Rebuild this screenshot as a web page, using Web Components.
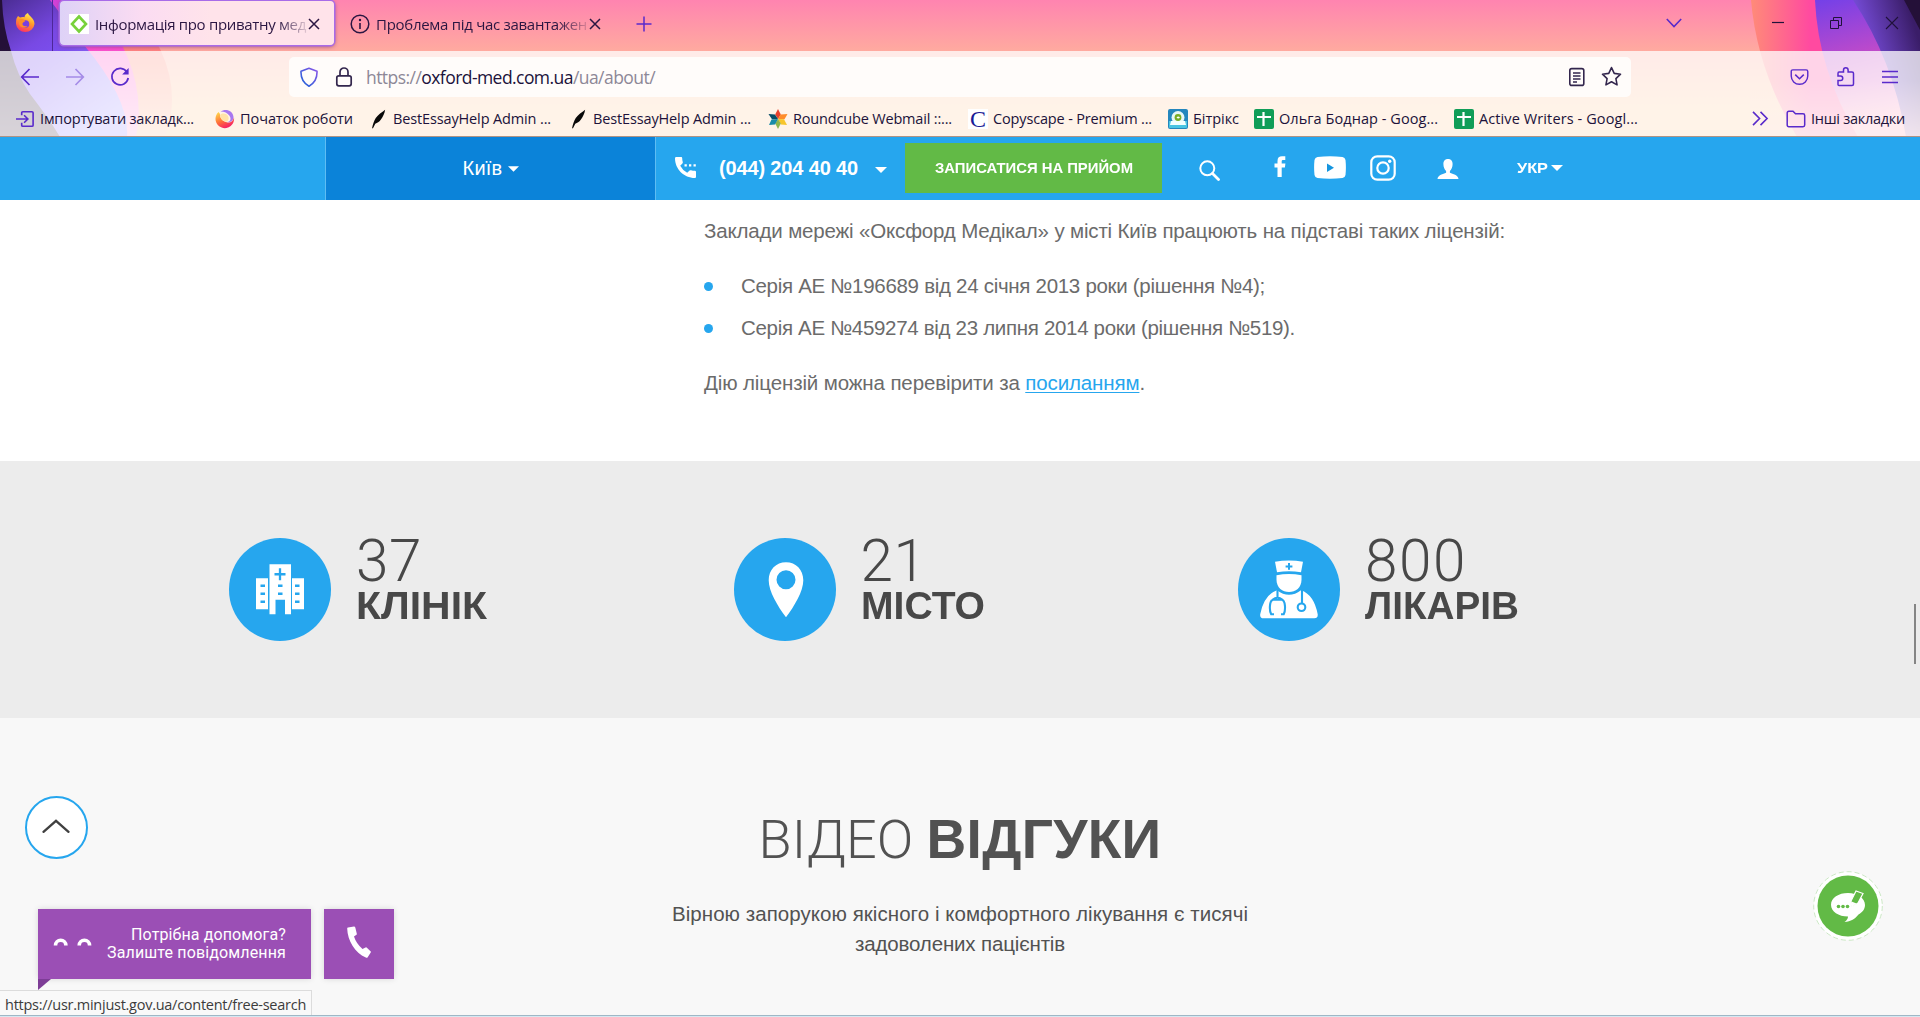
<!DOCTYPE html>
<html lang="uk">
<head>
<meta charset="utf-8">
<title>Оксфорд Медікал</title>
<style>
html,body{margin:0;padding:0;height:100%;overflow:hidden}
body{font-family:"Liberation Sans",Arial,sans-serif;background:#f8f8f8}
</style>
</head>
<body>
<app-window></app-window>
<script>
const ICONS = {
firefox:['0 0 20 20','<defs><linearGradient id="a" x1=".7" y1="0" x2=".3" y2="1"><stop offset="0" stop-color="#fff04f"/><stop offset=".45" stop-color="#ff9a2a"/><stop offset="1" stop-color="#ff2c68"/></linearGradient></defs><path d="M1.500 5.500 3 3l2 1.500c1-.5 3-.7 4.500-.3C9.500 2.500 11 .8 13 0c.2 3 6.500 4.500 6.500 11A9.300 9 0 0 1 1 11c0-2 .1-4 .5-5.500z" fill="url(#a)"/><circle cx="10.500" cy="11" r="3.800" fill="#7a3fe0"/><path d="M4 6.500c3-1 5.500 0 6 1.500.2 1-2 1-2.500 2.500-.5 2 2 3.500 5 2.500-2.500 3-8 1.500-8.500-2.500z" fill="#ff8c28"/>'],
oxford:['0 0 20 20','<path fill="#fff" d="M0 0h20v20H0z"/><path d="M10 2.500 17 10 10 17.500 3 10z" fill="none" stroke="#78d13b" stroke-width="2.600"/>'],
close:['0 0 12 12','<path d="M1 1l10 10M11 1 1 11" fill="none" stroke="#2b1642" stroke-width="1.500"/>'],
info:['0 0 20 20','<circle cx="10" cy="10" r="8.800" fill="none" stroke="#2b1642" stroke-width="1.500"/><path d="M10 9v6" stroke="#2b1642" stroke-width="1.600"/><circle cx="10" cy="6" r="1.200" fill="#2b1642"/>'],
plus:['0 0 16 16','<path d="M8 .5v15M.5 8h15" stroke="#592acb" stroke-width="1.500"/>'],
down:['0 0 16 10','<path d="M.8 1 8 8.500 15.200 1" fill="none" stroke="#592acb" stroke-width="1.600"/>'],
min:['0 0 12 12','<path d="M0 5.500h12" stroke="#20123a" stroke-width="1.200"/>'],
restore:['0 0 12 12','<path d="M.5 3.500h8v8h-8zM3.500 3.500v-3h8v8h-3" fill="none" stroke="#20123a"/>'],
winclose:['0 0 14 14','<path d="M1 1l12 12M13 1 1 13" stroke="#20123a" stroke-width="1.100"/>'],
back:['0 0 20 20','<path d="M19 10H2M9.500 2 1.700 10l7.800 8" fill="none" stroke="#592acb" stroke-width="1.700"/>'],
fwd:['0 0 20 20','<path d="M1 10h17M10.500 2l7.800 8-7.800 8" fill="none" stroke="#592acb" stroke-width="1.700" opacity=".45"/>'],
reload:['0 0 20 20','<path d="M17 5.200A8.200 8.200 0 1 0 18.200 11" fill="none" stroke="#592acb" stroke-width="1.700"/><path d="M18.600 1v6.500h-6.500z" fill="#592acb"/>'],
shield:['0 0 20 20','<defs><linearGradient id="b" x1="1" y1="0" x2="0" y2="1"><stop stop-color="#8b55e8"/><stop offset="1" stop-color="#1a62d6"/></linearGradient></defs><path d="M10 1.200 18 4.200c.3 6.500-1.500 11.500-8 15-6.500-3.500-8.300-8.500-8-15z" fill="none" stroke="url(#b)" stroke-width="1.600" stroke-linejoin="round"/>'],
lock:['0 0 18 20','<rect x="1.800" y="8.800" width="14.400" height="10" rx="2" fill="none" stroke="#33264d" stroke-width="1.700"/><path d="M5 8.500V5a4 4 0 0 1 8 0v3.500" fill="none" stroke="#33264d" stroke-width="1.700"/>'],
reader:['0 0 18 20','<rect x="1.800" y="1.600" width="14" height="16.800" rx="2" fill="none" stroke="#33264d" stroke-width="1.600"/><path d="M5 6h7.500M5 9h7.500M5 12h7.500M5 15h4" stroke="#33264d" stroke-width="1.300"/>'],
star:['0 0 20 20','<path d="m10 1.500 2.600 5.500 6 .8-4.400 4.200 1.100 6-5.300-3-5.300 3 1.100-6L1.400 7.800l6-.8z" fill="none" stroke="#33264d" stroke-width="1.500" stroke-linejoin="round"/>'],
pocket:['0 0 20 18','<path d="M3 1.500h14q1.700 0 1.700 1.700V8a8.700 8.700 0 0 1-17.400 0V3.200Q1.300 1.500 3 1.500z" fill="none" stroke="#592acb" stroke-width="1.500"/><path d="m5.500 6.500 4.500 4.300 4.500-4.300" fill="none" stroke="#592acb" stroke-width="1.600"/>'],
puzzle:['0 0 20 20','<path d="M3 5.500h4.500V3.500a2.300 2.300 0 0 1 4.600 0v2H16q1.500 0 1.500 1.500v10.500q0 1.500-1.500 1.500H3q-1 0-1-1v-4h2.500a2 2 0 0 0 0-4.500H2v-2.500q0-1.500 1-1.500z" fill="none" stroke="#592acb" stroke-width="1.500"/>'],
menu:['0 0 16 14','<path d="M0 1.500h16M0 7h16M0 12.500h16" stroke="#592acb" stroke-width="1.400"/>'],
import:['0 0 20 18','<path d="M6 5V2.500q0-1.200 1.200-1.200h9.600q1.200 0 1.200 1.200v13q0 1.200-1.200 1.200H7.200Q6 16.700 6 15.500V13M0 9h12M8.500 5l4 4-4 4" fill="none" stroke="#592acb" stroke-width="1.700"/>'],
fox2:['0 0 20 20','<defs><linearGradient id="c" x1=".2" y1="0" x2=".7" y2="1"><stop stop-color="#ffd54a"/><stop offset=".5" stop-color="#ff7139"/><stop offset="1" stop-color="#f5156c"/></linearGradient></defs><path d="M3.500 3A9.300 9.300 0 1 0 19 8.500c-1 4-3.500 5.500-6.500 5C8 13 4.500 9.500 5 5z" fill="url(#c)"/><path d="M5.500 2.500c5-3.500 12.500-1 13 5.500.2 3.500-3 6-6.500 5 3.500-.2 4.500-3.500 2.500-6.200C12.500 4 9.500 2.500 5.500 2.500z" fill="#a878f0"/><path d="M5 6c2-2 6-2 8 1 1 2 1 4-1 5.500C8.500 13 5.500 10 5 6z" fill="#ffe3a8"/>'],
feather:['0 0 16 20','<path d="M0 20c1-4 1.800-7.500 4-11C6.500 5 10.500 3 14 0c-.5 4-2.500 7.500-4.500 10.500-2 2.800-3.800 3.500-6 4.500L1.200 19.500z" fill="#090909"/>'],
round:['0 0 20 20','<path d="M10 0l2.800 5.500L10 10 7.200 5.500z" fill="#e8432e"/><path d="M19.500 5l-3 5.200L10 10l2.500-4.500z" fill="#ff8c2a"/><path d="M19 16l-6-.5L10 10l6 .3z" fill="#f7c52c"/><path d="M10 20l-2.800-5.500L10 10l2.800 4.500z" fill="#90b54b"/><path d="M1 16l2.500-5.500L10 10l-3 5.500z" fill="#198ba8"/><path d="M.5 5l6.500.5L10 10l-6 .3z" fill="#074e68"/>'],
bitrix:['0 0 20 20','<rect width="20" height="20" rx="2" fill="#2486bd"/><path d="M1 12h18v6q0 1-1 1H2q-1 0-1-1z" fill="#48c4e2"/><circle cx="10" cy="8.500" r="6.500" fill="#e8f7f5"/><path d="M3 12h14l1 4H2z" fill="#f2ffff"/><circle cx="10" cy="8.500" r="3.400" fill="#77ac24"/><path d="M8.500 8.500q1.700-2 3.500 0-1.800 2-3.500 0z" fill="#fff"/>'],
sheets:['0 0 20 20','<rect width="20" height="20" rx="2" fill="#109d58"/><path d="M9.500 3v14M3 8h14" stroke="#fff" stroke-width="2.200"/>'],
more:['0 0 18 16','<path d="m1 1 7 7-7 7M9 1l7 7-7 7" fill="none" stroke="#592acb" stroke-width="1.700"/>'],
folder:['0 0 20 18','<path d="M1.200 15V3q0-1.700 1.700-1.700H7l2.500 2.500h7.500q1.700 0 1.700 1.700V15q0 1.700-1.700 1.700H2.900Q1.200 16.700 1.200 15z" fill="none" stroke="#592acb" stroke-width="1.500"/>'],
caret:['0 0 12 6','<path d="M0 0h12L6 6z" fill="#fff"/>'],
callmenu:['0 0 21 21','<path d="M1.200 0h5q1 0 1 1.200 0 2 .6 3.800.2.800-.4 1.400L5.200 8.800a17 17 0 0 0 7 7l2.400-2.300q.6-.5 1.400-.3 1.900.6 3.900.6 1.100 0 1.100 1.100v5q0 1.100-1.100 1.100C8.900 20.900 0 12 0 1.200Q0 0 1.200 0z" fill="#fff"/><path d="M9.500 8.400h2.300M14 8.400h2.300M18.500 8.400h2.300" stroke="#fff" stroke-width="2.200"/>'],
search:['0 0 21 21','<circle cx="8.300" cy="8.300" r="7" fill="none" stroke="#fff" stroke-width="2"/><path d="m13.500 13.500 6 6" stroke="#fff" stroke-width="2.800" stroke-linecap="round"/>'],
fb:['0 0 12 21','<path d="M3.500 21V11.500H.5V7.500h3V5C3.500 1.700 5.200.3 8 .3h3.300v3.600H9.200C8 3.900 7.700 4.400 7.700 5.400v2.100h3.700l-.5 4H7.700V21z" fill="#fff"/>'],
yt:['0 0 32 23','<path d="M3.500 1Q16-.6 28.500 1 31 1.300 31.500 4q.8 7.500 0 15-.4 2.500-3 3-12.500 1.300-25 0-2.600-.5-3-3-.8-7.500 0-15Q1 1.300 3.500 1z" fill="#fff"/><path d="M13 7.500v8.500l7-4.300z" fill="#1595df"/>'],
insta:['0 0 26 26','<rect x="1.300" y="1.300" width="23.400" height="23.400" rx="6" fill="none" stroke="#fff" stroke-width="2.200"/><circle cx="13" cy="13" r="5.700" fill="none" stroke="#fff" stroke-width="2.200"/><circle cx="19.700" cy="6.200" r="1.700" fill="#fff"/>'],
user:['0 0 22 20','<path d="M11 0c3.300 0 4.600 2.200 4.600 5 0 3-1.100 5.500-2.700 7v1.800c3 1.200 8.100 2 8.600 6.200H.5c.5-4.200 5.600-5 8.600-6.200V12C7.500 10.500 6.400 8 6.400 5c0-2.800 1.300-5 4.600-5z" fill="#fff"/>'],
clinic:['0 0 102 102','<g fill="#fff"><path d="M27 40h12v31H27zM63 40h12v31H63zM40.500 26h21.500v50h-6V61.500h-9.500V76h-6z"/></g><path d="M51 30v12M45.500 36h11M49 47.500h4.500M49 55.500h4.500M31.500 47.500h4.500M31.500 55.500h4.500M31.500 63.500h4.500M66 47.500h4.500M66 55.500h4.500M66 63.500h4.500" stroke="#26a6ee" stroke-width="2.300"/>'],
pin:['0 0 102 102','<path fill="#fff" fill-rule="evenodd" d="M52 24c10 0 17.300 7.500 17.300 18 0 11-9 26-17.300 37C43.700 68 34.700 53 34.700 42 34.700 31.500 42 24 52 24zm0 8a9.500 9.500 0 1 0 0 19 9.500 9.500 0 0 0 0-19z"/>'],
doctor:['0 0 102 102','<g fill="#fff"><path d="M37 23.500q14-2.500 28 0L63 34q-12-1.800-24 0z"/><path d="M38.500 37q12.500-2.500 25 0v4.500c0 8-6 12.300-12.500 12.300S38.500 49.500 38.500 41.500z"/><path d="M39 52q12 9 24 0 13 4.500 16.700 24 .4 4-3.400 4H25.500q-3.800 0-3.300-4Q26 56.500 39 52z"/></g><path d="M51 24.800v6.800M47.600 28.200h6.800" stroke="#26a6ee" stroke-width="2"/><g fill="none" stroke="#26a6ee" stroke-width="2.100"><path d="M39.500 51v8.500M34.500 61.500q5-4.500 10 0M36 76h-2.800c-2-3.700-2-14 2-14.500h8.500c4 .5 4 10.800 2 14.500H43M64 51v14"/><circle cx="63.500" cy="69" r="3.800"/></g>'],
up:['0 0 28 14','<path d="m1.500 12.800 12.500-11 12.500 11" fill="none" stroke="#404040" stroke-width="2.300" stroke-linecap="round"/>'],
eyes:['0 0 40 8','<path d="M2.500 7.500a5.200 5.200 0 0 1 10.400 0M26.200 7.500a5.200 5.200 0 0 1 10.400 0" fill="none" stroke="#fff" stroke-width="3.600"/>'],
phone:['0 0 24 32','<path d="M1 1.500 7 .5q1 0 1.300 1l1.500 6.200q.1.800-.7 1.400L7 10.500q2.200 7 8.500 12.500l3-1.500q.8-.4 1.400.2l3.600 3.500q.7.600.2 1.400l-3 4.700q-.7.900-1.900.3C8 27 .5 14.500.2 2.500q0-.8.8-1z" fill="#fff"/>'],
chat:['0 0 70 70','<circle cx="35" cy="35" r="34.300" fill="#fff" stroke="#bfe3b6" stroke-width=".8" stroke-dasharray="5 3"/><circle cx="35" cy="35" r="30.500" fill="#62ba46"/><path d="M35 22c9.500 0 17 5.200 17 12 0 4.500-3 7.500-6.500 9.500-3.500 4.500-7.500 7-14 7.500 2.500-1.700 3.500-3.500 3.500-5.500-9.500 0-17-5-17-11.800S25.500 22 35 22z" fill="#fff"/><g fill="#62ba46"><circle cx="25.500" cy="35.500" r="1.800"/><circle cx="30" cy="35.500" r="1.800"/><circle cx="34.500" cy="35.500" r="1.800"/></g><path d="m38 30 5-10 7 2.500-5 9.500-6 4z" fill="#62ba46" stroke="#fff" stroke-width="1.200"/><path d="m38.500 30.500 5 2-4.500 3.500z" fill="#fff"/>']
};
const def=(n,html,init)=>customElements.define(n,class extends HTMLElement{
 connectedCallback(){
  if(this.shadowRoot)return;
  const r=this.attachShadow({mode:'open'});
  r.innerHTML=typeof html==='function'?html(this):html;
  if(init)init(this,r);
 }});
const A=(e,n,d='')=>e.getAttribute(n)??d;

def('ui-icon',e=>{
 const [vb,body]=ICONS[A(e,'name')];
 return `<style>:host{display:block;flex:none;width:${A(e,'w')}px;height:${A(e,'h')}px}svg{display:block;width:100%;height:100%}</style><svg viewBox="${vb}">${body}</svg>`;
});

/* Single text line tuned to a given measure: by tracking, or by glyph width when [stretch] is set */
def('fit-text',e=>`<style>:host{display:block;flex:none;white-space:nowrap;width:${A(e,'w')}px}span{display:inline-block;vertical-align:top;transform-origin:0 0}</style><span><slot></slot></span>`,(e,r)=>{
 const s=r.querySelector('span'),n=e.textContent.length;
 const w=s.getBoundingClientRect().width;
 if(!w)return;
 if(e.hasAttribute('stretch'))s.style.transform=`scaleX(${(+A(e,'w')/w).toFixed(4)})`;
 else s.style.letterSpacing=((+A(e,'w')-w)/n).toFixed(3)+'px';
});

def('browser-tab',e=>`<style>
:host{display:flex;align-items:center;box-sizing:border-box;width:274px;height:44px;padding:2px 0 0 9px;border-radius:4px;color:#2b1642;font:15px/24px "Open Sans","Noto Sans",sans-serif}
:host([active]){background:linear-gradient(90deg,#ded2f7,#fbdcf2 30%,#ffe3ea 55%);box-shadow:0 0 0 1.500px #a86be8,0 1px 5px #7d3b7a}
.t{margin-left:6px;width:212px;-webkit-mask:linear-gradient(90deg,#000 86%,#0002);mask:linear-gradient(90deg,#000 86%,#0002)}
.t+ui-icon{margin-left:1px}
</style><ui-icon name="${A(e,'icon')}" w="20" h="20"></ui-icon><div class="t"><fit-text w="${A(e,'w')}">${A(e,'label')}</fit-text></div><ui-icon name="close" w="12" h="12"></ui-icon>`);

def('bookmark-item',e=>`<style>
:host{display:flex;align-items:center;flex:none;margin-left:${A(e,'ml',0)}px;color:#20123a;font:14.500px/24px "Open Sans","Noto Sans",sans-serif}
fit-text{margin:1px 0 0 ${A(e,'gap',5)}px}
.c{width:20px;height:20px;background:#fff;color:#1c1c96;font:24px/20px "Liberation Serif",serif;text-align:center}
</style>${A(e,'icon')==='c'?'<div class="c">C</div>':`<ui-icon name="${A(e,'icon')}" w="${A(e,'iw',20)}" h="${A(e,'ih',20)}"></ui-icon>`}<fit-text w="${A(e,'w')}">${A(e,'label')}</fit-text>`);

def('browser-chrome',`<style>
:host{display:block;position:relative;height:137px;overflow:hidden;box-sizing:border-box;border-bottom:1px solid #b09384}
.art{position:absolute;left:0;top:0}
.tabs,.nav,.marks{position:relative;display:flex;align-items:center}
.tabs{height:51px;box-sizing:border-box;padding-bottom:5px}
.low{position:relative;height:85px;background:rgba(255,255,255,.76)}
.nav{height:50px;box-sizing:border-box;padding-top:1px}
.url{display:flex;align-items:center;width:1342px;height:40px;border-radius:5px;background:#fffcfa;margin-left:159px;box-sizing:border-box;padding-left:10px;color:#8d8897;font:17.500px/26px "Open Sans","Noto Sans",sans-serif}
.url fit-text{margin-top:1px}
b{font-weight:400;color:#20123a}
.marks{height:35px}
.sep{width:1px;height:51px;background:#4d2798;margin:5px 7px 0 17px}
</style>
<svg class="art" width="1920" height="137" viewBox="0 0 1920 137">
<defs>
<linearGradient id="bg" x2="0" y2="1"><stop stop-color="#ff84b0"/><stop offset=".38" stop-color="#ffab9f"/><stop offset=".8" stop-color="#ffce9e"/></linearGradient>
<linearGradient id="p" x2=".6" y2="1"><stop stop-color="#4a2c92"/><stop offset=".35" stop-color="#7849e4"/><stop offset=".5" stop-color="#7c50f0"/><stop offset="1" stop-color="#a89cff"/></linearGradient>
<linearGradient id="m" x2="0" y2="1"><stop stop-color="#d040d8"/><stop offset=".4" stop-color="#ff52cc"/><stop offset="1" stop-color="#ffb0d8"/></linearGradient>
<linearGradient id="o" x2="0" y2="1"><stop stop-color="#ff62a0"/><stop offset=".45" stop-color="#ff8a78"/><stop offset="1" stop-color="#ffc9a8"/></linearGradient>
<linearGradient id="m2"><stop stop-color="#ff8b78"/><stop offset=".35" stop-color="#ff4aa0"/><stop offset="1" stop-color="#ff4aa0"/></linearGradient>
<linearGradient id="p2" x2=".2" y2="1"><stop stop-color="#7340e8"/><stop offset=".5" stop-color="#c44bc8"/><stop offset="1" stop-color="#ff9cc8"/></linearGradient>
<linearGradient id="p3" x1="0" x2=".8" y1=".5" y2="0"><stop stop-color="#8b5cff"/><stop offset="1" stop-color="#3a1d68"/></linearGradient>
<linearGradient id="fade" x2="0" y2="1"><stop offset=".35" stop-color="#ffc0b0" stop-opacity="0"/><stop offset="1" stop-color="#ffc6b8" stop-opacity=".6"/></linearGradient>
<linearGradient id="dk" x2="0" y2="1"><stop offset=".35" stop-color="#241038"/><stop offset="1" stop-color="#5d4a60"/></linearGradient>
</defs>
<path fill="url(#bg)" d="M0 0h1920v137H0z"/>
<path fill="url(#o)" d="M0 0h126Q190 70 165 137H0z"/>
<path fill="url(#m)" d="M0 0h92Q150 70 136 137H0z"/>
<path fill="url(#p)" d="M0 0h50Q65 20 84 45 130 100 127 137H0z"/>
<path fill="url(#dk)" d="M0 0h2Q3 28 11 51 17 75 30 94 50 120 60 137H0z"/>
<path fill="url(#m2)" d="M1751 0Q1757 70 1797 137h123V0z"/>
<path fill="url(#p2)" d="M1815 0Q1818 70 1858 137h62V0z"/>
<path fill="url(#p3)" d="M1853 0Q1893 60 1906 137h14V0z"/>
<path fill="#241038" d="M1904 0h16v30z"/>
<path fill="url(#fade)" d="M1750 51h170v86h-170z"/>
</svg>
<div class="tabs">
<ui-icon name="firefox" w="20" h="20" style="margin-left:15px"></ui-icon><div class="sep"></div>
<browser-tab active icon="oxford" w="211" label="Інформація про приватну мед"></browser-tab>
<browser-tab icon="info" w="211" label="Проблема під час завантажен" style="margin-left:7px"></browser-tab>
<ui-icon name="plus" w="16" h="16" style="margin:2px 0 0 21px"></ui-icon>
<ui-icon name="down" w="16" h="10" style="margin-left:1014px"></ui-icon>
<ui-icon name="min" w="12" h="12" style="margin-left:90px"></ui-icon>
<ui-icon name="restore" w="12" h="12" style="margin:0 0 0 46px"></ui-icon>
<ui-icon name="winclose" w="14" h="14" style="margin:0 0 0 43px"></ui-icon>
</div>
<div class="low">
<div class="nav">
<ui-icon name="back" w="20" h="20" style="margin-left:20px"></ui-icon>
<ui-icon name="fwd" w="20" h="20" style="margin-left:25px"></ui-icon>
<ui-icon name="reload" w="20" h="20" style="margin-left:25px"></ui-icon>
<div class="url"><ui-icon name="shield" w="20" h="20"></ui-icon><ui-icon name="lock" w="18" h="20" style="margin:0 13px 0 16px"></ui-icon><fit-text w="289">https://<b>oxford-med.com.ua</b>/ua/about/</fit-text><ui-icon name="reader" w="18" h="20" style="margin-left:913px"></ui-icon><ui-icon name="star" w="21" h="21" style="margin-left:15px"></ui-icon></div>
<ui-icon name="pocket" w="19" h="18" style="margin-left:159px"></ui-icon>
<ui-icon name="puzzle" w="20" h="21" style="margin-left:27px"></ui-icon>
<ui-icon name="menu" w="16" h="14" style="margin-left:26px"></ui-icon>
</div>
<div class="marks">
<bookmark-item ml="16" icon="import" iw="19" ih="18" w="154" label="Імпортувати закладк..."></bookmark-item>
<bookmark-item ml="21" icon="fox2" w="113" label="Початок роботи"></bookmark-item>
<bookmark-item ml="19" icon="feather" iw="15" gap="6" w="158" label="BestEssayHelp Admin ..."></bookmark-item>
<bookmark-item ml="21" icon="feather" iw="15" gap="6" w="158" label="BestEssayHelp Admin ..."></bookmark-item>
<bookmark-item ml="17" icon="round" w="159" label="Roundcube Webmail ::..."></bookmark-item>
<bookmark-item ml="16" icon="c" w="159" label="Copyscape - Premium ..."></bookmark-item>
<bookmark-item ml="16" icon="bitrix" w="46" label="Бітрікс"></bookmark-item>
<bookmark-item ml="15" icon="sheets" w="159" label="Ольга Боднар - Goog..."></bookmark-item>
<bookmark-item ml="16" icon="sheets" w="159" label="Active Writers - Googl..."></bookmark-item>
<ui-icon name="more" w="17" h="15" style="margin-left:114px"></ui-icon>
<bookmark-item ml="17" icon="folder" ih="18" w="94" label="Інші закладки"></bookmark-item>
</div>
</div>`);

def('site-header',`<style>
:host{display:flex;align-items:center;box-sizing:border-box;height:63px;padding-bottom:2px;background:#26a6ee;color:#fff;font-size:20px;line-height:26px}
.city{display:flex;align-items:center;justify-content:center;gap:5px;box-sizing:border-box;width:331px;height:63px;margin:2px 0 0 325px;padding-bottom:1px;background:#0b83d9;border:solid #5ebdf3;border-width:0 1px}
.tel{font-weight:700;margin-left:23px}
.btn{display:flex;align-items:center;justify-content:center;width:257px;height:50px;background:#62ba46;font:700 15px/20px "Liberation Sans",sans-serif;margin-left:18px}
.lang{font:700 15px/20px "Liberation Sans",sans-serif;margin-left:58px}
</style>
<div class="city"><fit-text w="40">Київ</fit-text><ui-icon name="caret" w="11" h="6" style="margin-top:2px"></ui-icon></div>
<ui-icon name="callmenu" w="21" h="21" style="margin-left:19px"></ui-icon>
<fit-text class="tel" w="139">(044) 204 40 40</fit-text>
<ui-icon name="caret" w="12" h="6" style="margin:4px 0 0 17px"></ui-icon>
<div class="btn"><fit-text stretch w="198">ЗАПИСАТИСЯ НА ПРИЙОМ</fit-text></div>
<ui-icon name="search" w="21" h="21" style="margin:5px 0 0 37px"></ui-icon>
<ui-icon name="fb" w="12" h="21" style="margin:-3px 0 0 54px"></ui-icon>
<ui-icon name="yt" w="32" h="23" style="margin:-1px 0 0 28px"></ui-icon>
<ui-icon name="insta" w="26" h="26" style="margin:0 0 0 24px"></ui-icon>
<ui-icon name="user" w="22" h="20" style="margin:3px 0 0 41px"></ui-icon>
<fit-text class="lang" stretch w="31">УКР</fit-text>
<ui-icon name="caret" w="12" h="6" style="margin-left:3px"></ui-icon>`);

def('license-block',`<style>
:host{display:block;box-sizing:border-box;height:261px;background:#fff;padding:16px 0 0 704px;color:#6b6b6b;font-size:20.500px;line-height:30px}
ul{list-style:none;margin:25px 0;padding:0;display:flex;flex-direction:column;gap:12px}
li{display:flex;align-items:center;gap:28px}
li::before{content:"";width:9px;height:9px;border-radius:50%;background:#26a6ee}
a{color:#26a6ee;text-decoration:underline;text-decoration-thickness:1px;text-underline-offset:2px}
</style>
<fit-text w="801">Заклади мережі «Оксфорд Медікал» у місті Київ працюють на підставі таких ліцензій:</fit-text>
<ul><li><fit-text w="524">Серія АЕ №196689 від 24 січня 2013 роки (рішення №4);</fit-text></li>
<li><fit-text w="554">Серія АЕ №459274 від 23 липня 2014 роки (рішення №519).</fit-text></li></ul>
<fit-text w="441">Дію ліцензій можна перевірити за <a>посиланням</a>.</fit-text>`);

def('stat-item',e=>`<style>
:host{display:flex;width:504.500px;flex:none;color:#484848}
.c{width:102px;height:102.500px;border-radius:50%;background:#26a6ee;flex:none;margin-right:25px}
.n{font:300 58.500px/46px Roboto,"Inter",sans-serif}
.l{font-weight:700;font-size:38px;line-height:34px;margin-top:5px}
</style><div class="c"><ui-icon name="${A(e,'icon')}" w="102" h="102.5"></ui-icon></div>
<div><fit-text class="n" w="${A(e,'nw')}">${A(e,'n')}</fit-text><fit-text class="l" stretch w="${A(e,'lw')}">${A(e,'l')}</fit-text></div>`);

def('stats-band',`<style>:host{display:flex;box-sizing:border-box;height:257px;background:#ececec;padding:77px 0 0 229px}</style>
<stat-item icon="clinic" n="37" nw="66" l="КЛІНІК" lw="131"></stat-item>
<stat-item icon="pin" n="21" nw="66" l="МІСТО" lw="124"></stat-item>
<stat-item icon="doctor" n="800" nw="102" l="ЛІКАРІВ" lw="154"></stat-item>`);

def('video-reviews',`<style>
:host{display:flex;flex-direction:column;align-items:center;box-sizing:border-box;height:297px;background:#f8f8f8;padding-top:91px;color:#525252;font-size:20.500px;line-height:30px}
h2{display:flex;align-items:baseline;gap:13px;margin:0 0 29px;font-weight:400;line-height:60px}
.a{font:300 54px/60px Roboto,"Inter",sans-serif}
.b{font-weight:700;font-size:55px}
</style>
<h2><fit-text class="a" w="155">ВІДЕО</fit-text><fit-text class="b" w="235">ВІДГУКИ</fit-text></h2>
<fit-text w="576">Вірною запорукою якісного і комфортного лікування є тисячі</fit-text>
<fit-text w="210">задоволених пацієнтів</fit-text>`);

def('help-widget',`<style>
:host{position:absolute;left:38px;top:909px;display:flex;gap:13px;color:#fff;font:16px/18px Roboto,sans-serif}
.m{position:relative;display:flex;align-items:center;box-sizing:border-box;width:273px;height:70px;background:#9b4fb5;padding-left:15px;box-shadow:0 0 6px #0002}
.m::after{content:"";position:absolute;left:0;top:70px;border-top:11px solid #7d3d96;border-right:13px solid transparent}
.t{display:flex;flex-direction:column;align-items:flex-end;width:179px;margin-left:14px}
.p{display:flex;align-items:center;justify-content:center;width:70px;height:70px;background:#9b4fb5;box-shadow:0 0 6px #0002}
</style>
<div class="m"><ui-icon name="eyes" w="40" h="8" style="margin-top:-5px"></ui-icon><div class="t"><fit-text w="155">Потрібна допомога?</fit-text><fit-text w="179">Залиште повідомлення</fit-text></div></div>
<div class="p"><ui-icon name="phone" w="24" h="32" style="margin:-4px 1px 0 0"></ui-icon></div>`);

def('up-button',`<style>:host{position:absolute;left:25px;top:796px;width:63px;height:63px;box-sizing:border-box;border:2px solid #26a6ee;border-radius:50%;background:#fff;display:flex;align-items:center;justify-content:center}</style><ui-icon name="up" w="28" h="14" style="margin:-4px 1px 0 0"></ui-icon>`);

def('status-tip',`<style>:host{position:absolute;left:0;top:990px;width:312px;height:25px;box-sizing:border-box;border:solid #dcdcdc;border-width:1px 1px 0 0;background:#f9f9f9;padding-left:5px;color:#3c3c3c;font:14.500px/27px "Open Sans","Noto Sans",sans-serif}</style><fit-text w="301">https://usr.minjust.gov.ua/content/free-search</fit-text>`);

def('app-window',`<style>
:host{display:block;position:relative;width:1920px;height:1017px;overflow:hidden;background:#f8f8f8}
.edge{height:2px;background:linear-gradient(#9fb7c6 50%,#d5e9f2 50%)}
.chat{position:absolute;left:1813px;top:871px}
.thumb{position:absolute;left:1914px;top:604px;width:2px;height:60px;background:#858585}
</style>
<browser-chrome></browser-chrome><site-header></site-header><license-block></license-block><stats-band></stats-band><video-reviews></video-reviews><div class="edge"></div>
<up-button></up-button><help-widget></help-widget><status-tip></status-tip>
<ui-icon class="chat" name="chat" w="70" h="70"></ui-icon><div class="thumb"></div>`);
</script>
</body>
</html>
